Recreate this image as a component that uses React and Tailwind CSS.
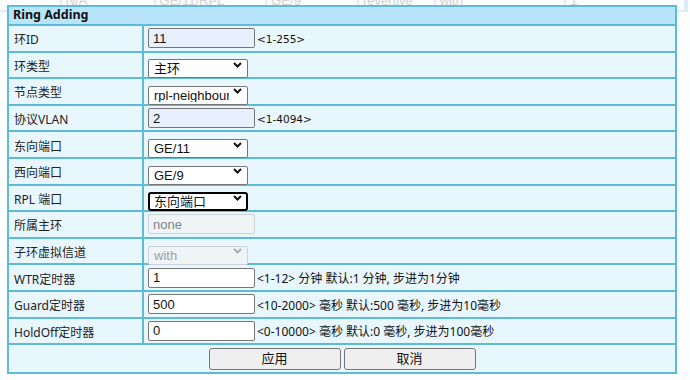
import { useState } from 'react';

const sans = 'font-["Noto_Sans","Noto_Sans_CJK_SC",sans-serif]';
const arial = 'font-["Liberation_Sans","Noto_Sans_CJK_SC",sans-serif]';

const rows = [
  { label: '环ID', kind: 'input', value: '11', fill: 'blue', hint: '<1-255>', short: true },
  { label: '环类型', kind: 'select', value: '主环', options: ['主环', '子环'] },
  { label: '节点类型', kind: 'select', value: 'rpl-neighbour', options: ['rpl-owner', 'rpl-neighbour', 'normal'] },
  { label: '协议VLAN', kind: 'input', value: '2', fill: 'blue', hint: '<1-4094>', short: true },
  { label: '东向端口', kind: 'select', value: 'GE/11', options: ['GE/9', 'GE/11'] },
  { label: '西向端口', kind: 'select', value: 'GE/9', options: ['GE/9', 'GE/11'] },
  { label: 'RPL 端口', kind: 'select', value: '东向端口', options: ['东向端口', '西向端口'], focus: true },
  { label: '所属主环', kind: 'input', value: 'none', disabled: true },
  { label: '子环虚拟信道', kind: 'select', value: 'with', options: ['with', 'without'], disabled: true },
  { label: 'WTR定时器', kind: 'input', value: '1', hint: '<1-12> 分钟 默认:1 分钟, 步进为1分钟' },
  { label: 'Guard定时器', kind: 'input', value: '500', hint: '<10-2000> 毫秒 默认:500 毫秒, 步进为10毫秒' },
  { label: 'HoldOff定时器', kind: 'input', value: '0', hint: '<0-10000> 毫秒 默认:0 毫秒, 步进为100毫秒' },
];

// faded list table peeking out above the dialog
const behind = [
  { w: 'w-[62px]', text: '' },
  { w: 'w-[94px]', text: 'N/A' },
  { w: 'w-[112px]', text: 'GE/11/RPL' },
  { w: 'w-[92px]', text: 'GE/9' },
  { w: 'w-[77px]', text: 'revertive' },
  { w: 'w-[131px]', text: 'with' },
  { w: 'w-[120px]', text: '1' },
];

function Chevron({ muted }) {
  return (
    <svg width="9" height="6" viewBox="0 0 9 6" className="pointer-events-none absolute right-[6px] top-1/2 -translate-y-1/2">
      <path d="M1 1 L4.5 4.5 L8 1" fill="none" stroke={muted ? '#a9b0b5' : '#111'} strokeWidth="2" />
    </svg>
  );
}

function Field({ row }) {
  const [val, setVal] = useState(row.value);

  if (row.kind === 'select') {
    const box = row.focus
      ? 'border-2 border-black rounded-[3px] pl-[4px] bg-white text-[#111]'
      : row.disabled
        ? 'border border-[#cdd3d8] bg-[#eff4f7] text-[#9aa0a5] rounded-[2px] pl-[5px]'
        : 'border border-[#767676] bg-white text-[#111] rounded-[2px] pl-[5px]';
    return (
      <div className="relative w-[100px] h-[19px]">
        <select
          value={val}
          disabled={row.disabled}
          onChange={(e) => setVal(e.target.value)}
          className={`appearance-none w-full h-full pr-[18px] text-[13px] leading-none outline-none ${arial} ${box}`}
        >
          {row.options.map((o) => <option key={o} value={o}>{o}</option>)}
        </select>
        <Chevron muted={row.disabled} />
      </div>
    );
  }

  const box = row.disabled
    ? 'border border-[#cdd3d8] bg-[#eff4f7] text-[#7d8489]'
    : row.fill === 'blue'
      ? 'border border-[#767676] bg-[#e8f0fe] text-[#111]'
      : 'border border-[#767676] bg-white text-[#111]';
  return (
    <input
      value={val}
      disabled={row.disabled}
      onChange={(e) => setVal(e.target.value)}
      className={`w-[107px] h-[20px] px-[4px] rounded-[2px] text-[13px] outline-none ${arial} ${box}`}
    />
  );
}

export default function App() {
  return (
    <div className={`relative w-[690px] h-[380px] bg-[#fbfdff] overflow-hidden ${sans}`}>
      {/* list behind the dialog */}
      <div className="flex h-[12px] w-[688px] border-b-2 border-r-2 border-[#dcedf5]">
        {behind.map((c, i) => (
          <div key={i} className={`${c.w} h-full overflow-hidden border-r-2 border-[#dcedf5] pl-[4px] text-[13px] text-[#d2d2d2] ${arial}`}>
            <span className="block leading-[13px] -mt-[6px]">{c.text}</span>
          </div>
        ))}
      </div>

      {/* Ring Adding dialog */}
      <div className="absolute left-[7px] top-[5px] w-[670px] border-2 border-[#5ebbd8] bg-[#e8f7fe]">
        <div className="h-[19px] flex items-center border-b-2 border-[#5ebbd8] bg-[#b9e5fc] pl-[4px] text-[12.5px] font-bold text-[#111]">
          Ring Adding
        </div>

        {rows.map((row) => (
          <div key={row.label} className="flex h-[26.6px] border-b-2 border-[#5ebbd8]">
            <div className="w-[135px] shrink-0 flex items-center border-r-2 border-[#5ebbd8] pl-[5px] pt-[4px] text-[12px] text-[#222]">
              {row.label}
            </div>
            <div className="flex-1 flex items-center pl-[4px]">
              <Field row={row} />
              {row.hint && (
                <span
                  className={`ml-[2px] pt-[3px] whitespace-nowrap text-[#111] ${
                    row.short ? 'text-[10.5px] font-["DejaVu_Sans",sans-serif]' : 'text-[12px]'
                  }`}
                >
                  {row.hint}
                </span>
              )}
            </div>
          </div>
        ))}

        <div className="h-[27px] flex items-center justify-center gap-[3px]">
          <button className="w-[132px] h-[22px] rounded-[3px] border border-[#767676] bg-[#efefef] text-[13px] text-[#111]">应用</button>
          <button className="w-[132px] h-[22px] rounded-[3px] border border-[#767676] bg-[#efefef] text-[13px] text-[#111]">取消</button>
        </div>
      </div>
    </div>
  );
}
